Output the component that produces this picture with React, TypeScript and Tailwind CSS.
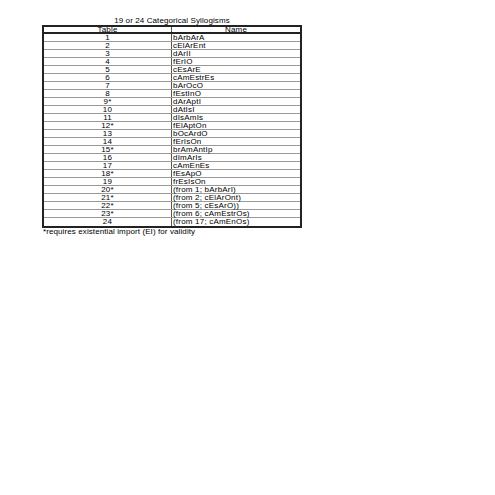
const rows: [string, string][] = [
  ['1', 'bArbArA'],
  ['2', 'cElArEnt'],
  ['3', 'dArII'],
  ['4', 'fErIO'],
  ['5', 'cEsArE'],
  ['6', 'cAmEstrEs'],
  ['7', 'bArOcO'],
  ['8', 'fEstInO'],
  ['9*', 'dArAptI'],
  ['10', 'dAtIsI'],
  ['11', 'dIsAmIs'],
  ['12*', 'fElAptOn'],
  ['13', 'bOcArdO'],
  ['14', 'fErIsOn'],
  ['15*', 'brAmAntIp'],
  ['16', 'dImArIs'],
  ['17', 'cAmEnEs'],
  ['18*', 'fEsApO'],
  ['19', 'frEsIsOn'],
  ['20*', '(from 1; bArbArI)'],
  ['21*', '(from 2; cElArOnt)'],
  ['22*', '(from 5; cEsArO))'],
  ['23*', '(from 6; cAmEstrOs)'],
  ['24', '(from 17; cAmEnOs)'],
]

export default function App() {
  return (
    <div className="min-h-[495px] w-[495px] bg-white pl-[42px] pt-[16px] text-black" style={{ fontFamily: '"Liberation Sans", Arial, sans-serif' }}>
      <div className="w-[260px] text-center text-[8px] leading-[9px] tracking-[0.1px]">19 or 24 Categorical Syllogisms</div>

      <div className="w-[260px] border-2 border-[#222]">
        <div className="flex h-[7px] border-b-2 border-[#222] text-[8px] leading-[6px] tracking-[0.2px]">
          <div className="w-[128px] border-r border-[#555] text-center">Table</div>
          <div className="flex-1 text-center">Name</div>
        </div>
        {rows.map(([n, name], i) => (
          <div
            key={n}
            className={`flex h-[8px] text-[8px] leading-[7px] tracking-[0.2px] ${i < rows.length - 1 ? 'border-b border-[#999]' : ''}`}
          >
            <div className="w-[128px] border-r border-[#555] text-center">{n}</div>
            <div className="flex-1 pl-[1px]">{name}</div>
          </div>
        ))}
      </div>

      <div className="pl-[1px] text-[8px] leading-[8px] tracking-[0.1px]">*requires existential import (EI) for validity</div>
    </div>
  )
}
